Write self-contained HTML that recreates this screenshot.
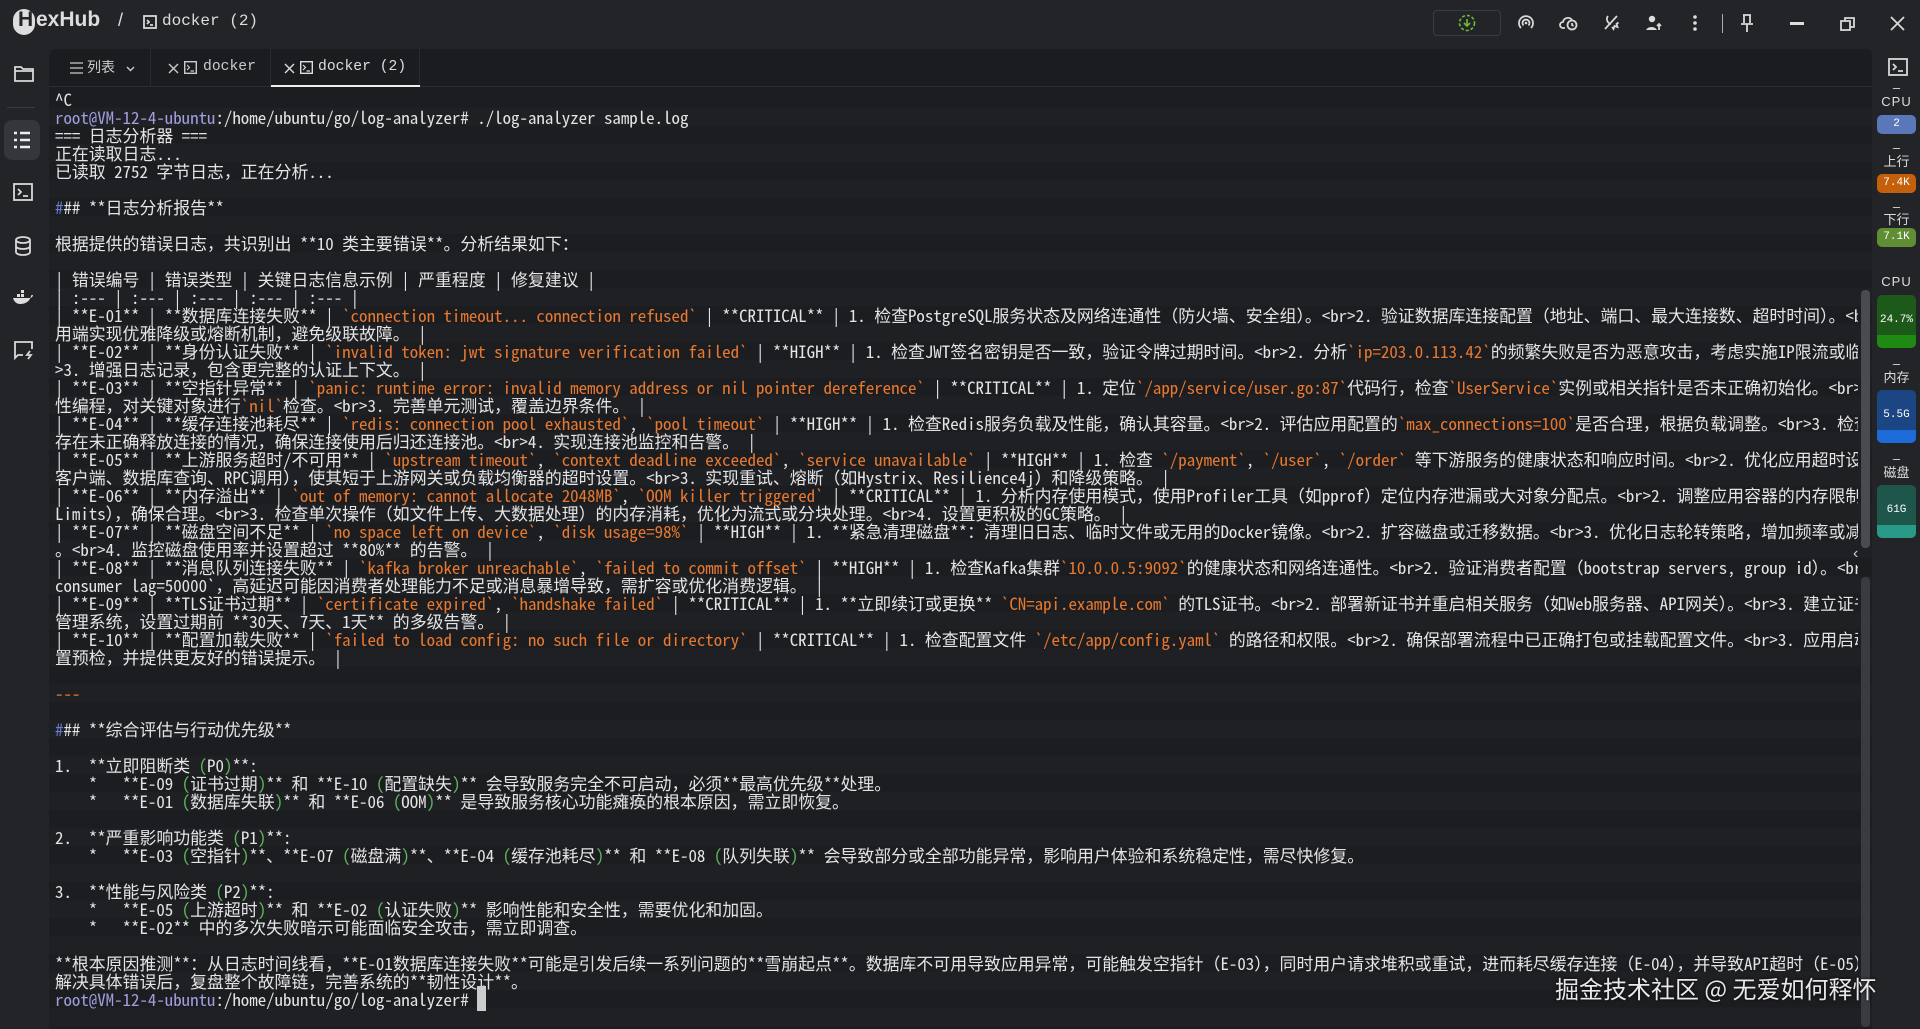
<!DOCTYPE html>
<html><head><meta charset="utf-8"><style>
*{margin:0;padding:0;box-sizing:border-box}
body{width:1920px;height:1029px;background:#232428;overflow:hidden;position:relative;font-family:"Liberation Sans","Noto Sans CJK SC",sans-serif;color:#ddd}
.abs{position:absolute}
#term{position:absolute;left:49px;top:87px;width:1823px;height:942px;background:#1b1c1f;overflow:hidden;
background-image:repeating-linear-gradient(#1c1d21 0 18px,#1f2024 18px 36px);background-position:0 3px}
#clip{position:absolute;left:55px;top:90px;width:1803px;height:939px;overflow:hidden}
#txt{position:absolute;left:0;top:0;font-family:"Noto Sans Mono CJK SC","Liberation Mono","Noto Sans CJK SC",monospace;font-size:16.9px;line-height:18px;white-space:pre;color:#e4e4e4;font-weight:500}
.o{color:#e8792f}.p{color:#9f9fe0}.g{color:#5cb85c}.b{color:#6d7fd8}
#tabs{position:absolute;left:49px;top:49px;width:1823px;height:38px;background:#1b1c1f;border-bottom:1px solid #2c2d31;border-radius:6px 6px 0 0}
.tab{position:absolute;top:0;height:38px;border-right:1px solid #2a2b2f}
.tt{position:absolute;top:0;line-height:37px;font-size:14.7px;color:#ccc;font-family:"Liberation Mono",monospace;white-space:nowrap}
.ic{stroke:#d8d8d8;fill:none;stroke-width:1.8}
.side{position:absolute;left:1877px;width:39px;text-align:center;font-size:13px;line-height:16px;color:#ddd}
.badge{position:absolute;left:1877px;width:39px;border-radius:5px;color:#fff;font-family:"Liberation Mono",monospace;font-size:11px;text-align:center}
</style></head><body>
<!-- title bar -->
<div class="abs" style="left:13px;top:9px;width:22px;height:26px;border-radius:11px;background:#ddd"></div>
<div class="abs" style="left:18px;top:8px;font:bold 21px 'Liberation Sans',sans-serif;color:#232428">H</div>
<div class="abs" style="left:36px;top:8px;font:bold 21px 'Liberation Sans',sans-serif;color:#ddd">exHub</div>
<div class="abs" style="left:118px;top:10px;font:18px 'Liberation Sans';color:#ddd">/</div>
<svg class="abs" style="left:143px;top:15px" width="14" height="14"><rect x="1" y="1" width="12" height="12" class="ic" stroke-width="1.4"/><path d="M4 5l2 2-2 2M7 10h3" class="ic" stroke-width="1.2"/></svg>
<div class="abs" style="left:162px;top:12px;font:16px 'Liberation Mono';color:#ddd">docker (2)</div>
<div class="abs" style="left:1433px;top:10px;width:68px;height:26px;border:1px solid #3a3b40;border-radius:4px"></div>
<svg class="abs" style="left:1458px;top:14px" width="18" height="18"><circle cx="9" cy="9" r="7.5" stroke="#6cbd3a" stroke-width="1.6" fill="none" stroke-dasharray="3 2"/><path d="M9 5v7M6 9l3 3 3-3" stroke="#6cbd3a" stroke-width="1.6" fill="none"/></svg>
<svg class="abs" style="left:1517px;top:14px" width="18" height="18"><path d="M4 14a7 7 0 1 1 10 0M6.5 11.5a3.5 3.5 0 1 1 5 0" class="ic"/><circle cx="9" cy="9" r="1.3" fill="#ddd"/></svg>
<svg class="abs" style="left:1559px;top:14px" width="20" height="18"><path d="M6 14H4a3 3 0 0 1 0-6 5 5 0 0 1 9-2" class="ic"/><circle cx="13" cy="11" r="4.5" class="ic"/><path d="M13 9v2l1.5 1" class="ic" stroke-width="1.3"/></svg>
<svg class="abs" style="left:1602px;top:13px" width="18" height="18"><path d="M3 16L15 3" class="ic"/><path d="M6 3a5 5 0 0 0 3 8M10 14l1.5 2 1-3 3 1-1-3 2-1.5" class="ic" stroke-width="1.4"/></svg>
<svg class="abs" style="left:1645px;top:14px" width="18" height="18"><circle cx="7" cy="5" r="3.2" fill="#ddd"/><path d="M1 16a6 5 0 0 1 11 0z" fill="#ddd"/><path d="M14 16v-6M12 12l2-2 2 2" class="ic" stroke-width="1.4"/></svg>
<svg class="abs" style="left:1692px;top:14px" width="6" height="18"><circle cx="3" cy="3" r="1.8" fill="#ddd"/><circle cx="3" cy="9" r="1.8" fill="#ddd"/><circle cx="3" cy="15" r="1.8" fill="#ddd"/></svg>
<div class="abs" style="left:1722px;top:14px;width:1px;height:19px;background:#aaa"></div>
<svg class="abs" style="left:1739px;top:13px" width="16" height="20"><path d="M4 2h8M5 2v8M11 2v8M2 11h12M8 11v8" class="ic"/></svg>
<div class="abs" style="left:1790px;top:22px;width:14px;height:3px;background:#ddd"></div>
<svg class="abs" style="left:1840px;top:16px" width="16" height="16"><rect x="1" y="5" width="9" height="9" class="ic"/><path d="M5 5V2h9v9h-4" class="ic"/></svg>
<svg class="abs" style="left:1890px;top:16px" width="15" height="15"><path d="M1 1l13 13M14 1L1 14" class="ic"/></svg>
<!-- left sidebar -->
<svg class="abs" style="left:14px;top:65px" width="20" height="18"><path d="M1 2h6l2 2h10v12H1z" class="ic"/><path d="M1 6h18" class="ic"/></svg>
<div class="abs" style="left:7px;top:107px;width:28px;height:1px;background:#3a3b40"></div>
<div class="abs" style="left:4px;top:120px;width:36px;height:40px;border-radius:8px;background:#35363b"></div>
<svg class="abs" style="left:13px;top:131px" width="18" height="18"><path d="M1 2h3M7 2h10M1 9h3M7 9h10M1 16h3M7 16h10" stroke="#eee" stroke-width="2.6"/></svg>
<svg class="abs" style="left:13px;top:183px" width="20" height="18"><rect x="1" y="1" width="18" height="16" class="ic"/><path d="M5 6l3 3-3 3M10 13h5" class="ic"/></svg>
<svg class="abs" style="left:14px;top:236px" width="18" height="20"><ellipse cx="9" cy="4" rx="7" ry="3" class="ic"/><path d="M2 4v12c0 4 14 4 14 0V4M2 10c0 4 14 4 14 0" class="ic"/></svg>
<svg class="abs" style="left:12px;top:290px" width="22" height="16"><path d="M1 8h17c2 0 3-2 3-3-1 0-2 0-2 1-1 5-5 8-11 8C5 14 2 12 1 8z" fill="#ddd"/><rect x="5" y="4" width="3" height="3" fill="#ddd"/><rect x="9" y="4" width="3" height="3" fill="#ddd"/><rect x="9" y="0" width="3" height="3" fill="#ddd"/></svg>
<svg class="abs" style="left:13px;top:340px" width="22" height="20"><path d="M10 15H5l-3 3V2h17v7" class="ic"/><path d="M17 11l-3 4h4l-3 4" class="ic" stroke-width="1.5"/></svg>
<!-- tabs (absolute coords inside #tabs, left=49) -->
<div id="tabs">
<div class="tab" style="left:0;width:102px">
 <svg class="abs" style="left:21px;top:13px" width="13" height="12"><path d="M0 1h13M0 6h13M0 11h13" stroke="#ccc" stroke-width="1.3"/></svg>
 <div class="tt" style="left:38px;font-family:'Noto Sans CJK SC',sans-serif;font-size:14px">列表</div>
 <svg class="abs" style="left:77px;top:17px" width="9" height="6"><path d="M1 1l3.5 3.5L8 1" stroke="#ccc" stroke-width="1.4" fill="none"/></svg>
</div>
<div class="tab" style="left:102px;width:120px">
 <svg class="abs" style="left:17px;top:14px" width="11" height="11"><path d="M1 1l9 9M10 1L1 10" stroke="#ccc" stroke-width="1.4"/></svg>
 <svg class="abs" style="left:33px;top:12px" width="13" height="13"><rect x="0.7" y="0.7" width="11.6" height="11.6" stroke="#ccc" stroke-width="1.4" fill="none"/><path d="M3 4l2.5 2.5L3 9M6.5 10h3.5" stroke="#ccc" stroke-width="1.2" fill="none"/></svg>
 <div class="tt" style="left:52px">docker</div>
</div>
<div class="tab" style="left:222px;width:149px">
 <svg class="abs" style="left:13px;top:14px" width="11" height="11"><path d="M1 1l9 9M10 1L1 10" stroke="#ddd" stroke-width="1.4"/></svg>
 <svg class="abs" style="left:29px;top:12px" width="13" height="13"><rect x="0.7" y="0.7" width="11.6" height="11.6" stroke="#ddd" stroke-width="1.4" fill="none"/><path d="M3 4l2.5 2.5L3 9M6.5 10h3.5" stroke="#ddd" stroke-width="1.2" fill="none"/></svg>
 <div class="tt" style="left:47px;color:#ddd">docker (2)</div>
 <div style="position:absolute;left:0;bottom:-1px;width:149px;height:3px;background:#eee"></div>
</div>
</div>
<div id="term"></div>
<div class="abs" style="left:1861px;top:290px;width:9px;height:258px;background:#4a4b50;border-radius:4px"></div>
<div class="abs" style="left:1853px;top:545px;font-size:16px;color:#ccc">‹</div>
<div class="abs" style="left:1861px;top:577px;width:9px;height:450px;background:#3a3b40;border-radius:4px"></div>
<div id="clip"><pre id="txt">^C
<span class="p">root@VM-12-4-ubuntu</span>:/home/ubuntu/go/log-analyzer# ./log-analyzer sample.log
=== 日志分析器 ===
正在读取日志...
已读取 2752 字节日志，正在分析...

<span class="b">#</span>## **日志分析报告**

根据提供的错误日志，共识别出 **10 类主要错误**。分析结果如下：

| 错误编号 | 错误类型 | 关键日志信息示例 | 严重程度 | 修复建议 |
| :--- | :--- | :--- | :--- | :--- |
| **E-01** | **数据库连接失败** | <span class="o">`connection timeout... connection refused`</span> | **CRITICAL** | 1. 检查PostgreSQL服务状态及网络连通性（防火墙、安全组）。&lt;br&gt;2. 验证数据库连接配置（地址、端口、最大连接数、超时时间）。&lt;br&gt;3. 在应
用端实现优雅降级或熔断机制，避免级联故障。 |
| **E-02** | **身份认证失败** | <span class="o">`invalid token: jwt signature verification failed`</span> | **HIGH** | 1. 检查JWT签名密钥是否一致，验证令牌过期时间。&lt;br&gt;2. 分析<span class="o">`ip=203.0.113.42`</span>的频繁失败是否为恶意攻击，考虑实施IP限流或临时封禁。&lt;br
&gt;3. 增强日志记录，包含更完整的认证上下文。 |
| **E-03** | **空指针异常** | <span class="o">`panic: runtime error: invalid memory address or nil pointer dereference`</span> | **CRITICAL** | 1. 定位<span class="o">`/app/service/user.go:87`</span>代码行，检查<span class="o">`UserService`</span>实例或相关指针是否未正确初始化。&lt;br&gt;2. 添加防御
性编程，对关键对象进行<span class="o">`nil`</span>检查。&lt;br&gt;3. 完善单元测试，覆盖边界条件。 |
| **E-04** | **缓存连接池耗尽** | <span class="o">`redis: connection pool exhausted`</span>, <span class="o">`pool timeout`</span> | **HIGH** | 1. 检查Redis服务负载及性能，确认其容量。&lt;br&gt;2. 评估应用配置的<span class="o">`max_connections=100`</span>是否合理，根据负载调整。&lt;br&gt;3. 检查代码中是否
存在未正确释放连接的情况，确保连接使用后归还连接池。&lt;br&gt;4. 实现连接池监控和告警。 |
| **E-05** | **上游服务超时/不可用** | <span class="o">`upstream timeout`</span>, <span class="o">`context deadline exceeded`</span>, <span class="o">`service unavailable`</span> | **HIGH** | 1. 检查 <span class="o">`/payment`</span>, <span class="o">`/user`</span>, <span class="o">`/order`</span> 等下游服务的健康状态和响应时间。&lt;br&gt;2. 优化应用超时设置（如HTTP
客户端、数据库查询、RPC调用），使其短于上游网关或负载均衡器的超时设置。&lt;br&gt;3. 实现重试、熔断（如Hystrix、Resilience4j）和降级策略。 |
| **E-06** | **内存溢出** | <span class="o">`out of memory: cannot allocate 2048MB`</span>, <span class="o">`OOM killer triggered`</span> | **CRITICAL** | 1. 分析内存使用模式，使用Profiler工具（如pprof）定位内存泄漏或大对象分配点。&lt;br&gt;2. 调整应用容器的内存限制（Requests/
Limits），确保合理。&lt;br&gt;3. 检查单次操作（如文件上传、大数据处理）的内存消耗，优化为流式或分块处理。&lt;br&gt;4. 设置更积极的GC策略。 |
| **E-07** | **磁盘空间不足** | <span class="o">`no space left on device`</span>, <span class="o">`disk usage=98%`</span> | **HIGH** | 1. **紧急清理磁盘**：清理旧日志、临时文件或无用的Docker镜像。&lt;br&gt;2. 扩容磁盘或迁移数据。&lt;br&gt;3. 优化日志轮转策略，增加频率或减少保留天数
。&lt;br&gt;4. 监控磁盘使用率并设置超过 **80%** 的告警。 |
| **E-08** | **消息队列连接失败** | <span class="o">`kafka broker unreachable`</span>, <span class="o">`failed to commit offset`</span> | **HIGH** | 1. 检查Kafka集群<span class="o">`10.0.0.5:9092`</span>的健康状态和网络连通性。&lt;br&gt;2. 验证消费者配置（bootstrap servers, group id）。&lt;br&gt;3. 监控 `
consumer lag=50000`，高延迟可能因消费者处理能力不足或消息暴增导致，需扩容或优化消费逻辑。 |
| **E-09** | **TLS证书过期** | <span class="o">`certificate expired`</span>, <span class="o">`handshake failed`</span> | **CRITICAL** | 1. **立即续订或更换** <span class="o">`CN=api.example.com`</span> 的TLS证书。&lt;br&gt;2. 部署新证书并重启相关服务（如Web服务器、API网关）。&lt;br&gt;3. 建立证书生命周期
管理系统，设置过期前 **30天、7天、1天** 的多级告警。 |
| **E-10** | **配置加载失败** | <span class="o">`failed to load config: no such file or directory`</span> | **CRITICAL** | 1. 检查配置文件 <span class="o">`/etc/app/config.yaml`</span> 的路径和权限。&lt;br&gt;2. 确保部署流程中已正确打包或挂载配置文件。&lt;br&gt;3. 应用启动前应进行配
置预检，并提供更友好的错误提示。 |

<span class="o">---</span>

<span class="b">#</span>## **综合评估与行动优先级**

1.  **立即阻断类 <span class="g">(</span>P0<span class="g">)</span>**:
    *   **E-09 <span class="g">(</span>证书过期<span class="g">)</span>** 和 **E-10 <span class="g">(</span>配置缺失<span class="g">)</span>** 会导致服务完全不可启动，必须**最高优先级**处理。
    *   **E-01 <span class="g">(</span>数据库失联<span class="g">)</span>** 和 **E-06 <span class="g">(</span>OOM<span class="g">)</span>** 是导致服务核心功能瘫痪的根本原因，需立即恢复。

2.  **严重影响功能类 <span class="g">(</span>P1<span class="g">)</span>**:
    *   **E-03 <span class="g">(</span>空指针<span class="g">)</span>**、**E-07 <span class="g">(</span>磁盘满<span class="g">)</span>**、**E-04 <span class="g">(</span>缓存池耗尽<span class="g">)</span>** 和 **E-08 <span class="g">(</span>队列失联<span class="g">)</span>** 会导致部分或全部功能异常，影响用户体验和系统稳定性，需尽快修复。

3.  **性能与风险类 <span class="g">(</span>P2<span class="g">)</span>**:
    *   **E-05 <span class="g">(</span>上游超时<span class="g">)</span>** 和 **E-02 <span class="g">(</span>认证失败<span class="g">)</span>** 影响性能和安全性，需要优化和加固。
    *   **E-02** 中的多次失败暗示可能面临安全攻击，需立即调查。

**根本原因推测**：从日志时间线看，**E-01数据库连接失败**可能是引发后续一系列问题的**雪崩起点**。数据库不可用导致应用异常，可能触发空指针（E-03），同时用户请求堆积或重试，进而耗尽缓存连接（E-04），并导致API超时（E-05）。建议在
解决具体错误后，复盘整个故障链，完善系统的**韧性设计**。
<span class="p">root@VM-12-4-ubuntu</span>:/home/ubuntu/go/log-analyzer# <span style="background:#ccc">&#160;</span></pre></div>
<div class="abs" style="left:1555px;top:970px;font:24px 'Noto Sans CJK SC',sans-serif;color:#e8e8e8;text-shadow:0 0 3px #000">掘金技术社区 @ 无爱如何释怀</div>
<!-- right panel -->
<svg class="abs" style="left:1888px;top:58px" width="20" height="18"><rect x="1" y="1" width="18" height="16" class="ic"/><path d="M5 6l3 3-3 3M10 13h5" class="ic"/></svg>
<div class="side" style="top:80px">–</div><div class="side" style="top:94px;letter-spacing:1px">CPU</div>
<div class="badge" style="top:115px;height:19px;line-height:19px;background:#5a78b8">2</div>
<div class="side" style="top:140px">–</div><div class="side" style="top:154px">上行</div>
<div class="badge" style="top:174px;height:19px;line-height:19px;background:#c4600c">7.4K</div>
<div class="side" style="top:199px">–</div><div class="side" style="top:212px">下行</div>
<div class="badge" style="top:228px;height:19px;line-height:19px;background:#5f8e34">7.1K</div>
<div class="side" style="top:274px;letter-spacing:1px">CPU</div>
<div class="badge" style="top:295px;height:53px;line-height:50px;background:#1d5a1a;overflow:hidden">24.7%<div style="position:absolute;left:0;bottom:0;width:100%;height:13px;background:#1e8a12"></div></div>
<div class="side" style="top:356px">–</div><div class="side" style="top:370px">内存</div>
<div class="badge" style="top:390px;height:53px;line-height:50px;background:#1c4583;overflow:hidden">5.5G<div style="position:absolute;left:0;bottom:0;width:100%;height:13px;background:#1c6bd8"></div></div>
<div class="side" style="top:451px">–</div><div class="side" style="top:465px">磁盘</div>
<div class="badge" style="top:485px;height:53px;line-height:50px;background:#1f564c;overflow:hidden">61G<div style="position:absolute;left:0;bottom:0;width:100%;height:13px;background:#2a9a88"></div></div>
</body></html>
